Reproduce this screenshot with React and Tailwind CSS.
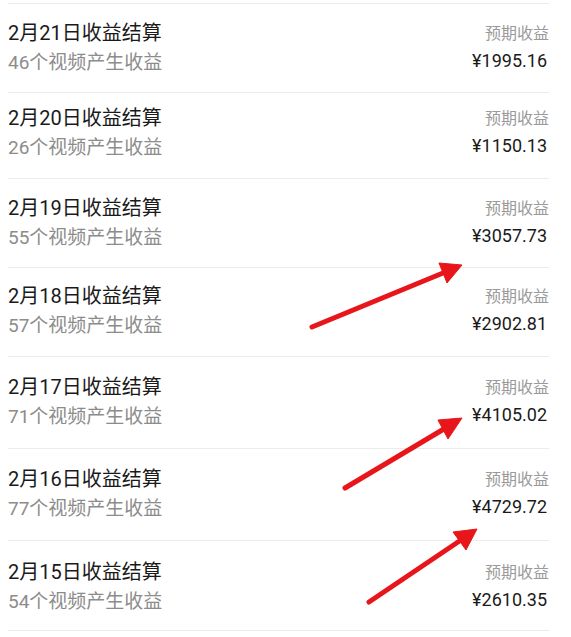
const rows = [
  { date: "2月21日收益结算", count: 46, amount: "¥1995.16", h: "h-[89px]", pt: "pt-[14px]" },
  { date: "2月20日收益结算", count: 26, amount: "¥1150.13", h: "h-[86px]", pt: "pt-[10px]" },
  { date: "2月19日收益结算", count: 55, amount: "¥3057.73", h: "h-[89px]", pt: "pt-[14px]" },
  { date: "2月18日收益结算", count: 57, amount: "¥2902.81", h: "h-[89px]", pt: "pt-[13px]" },
  { date: "2月17日收益结算", count: 71, amount: "¥4105.02", h: "h-[92px]", pt: "pt-[15px]" },
  { date: "2月16日收益结算", count: 77, amount: "¥4729.72", h: "h-[92px]", pt: "pt-[15px]" },
  { date: "2月15日收益结算", count: 54, amount: "¥2610.35", h: "h-[90px]", pt: "pt-[16px]" },
];

const font = { fontFamily: '"Roboto", "Noto Sans CJK SC", sans-serif' };

function Row({ date, count, amount, h, pt }) {
  return (
    <div className={`flex justify-between border-b border-[#ececec] ${h} ${pt}`}>
      <div className="flex flex-col">
        <span className="text-[20px] leading-[30px] text-[#1a1a1a]">{date}</span>
        <span className="text-[19px] leading-[30px] text-[#8c8c8c]">{count}个视频产生收益</span>
      </div>
      <div className="flex flex-col items-end pt-[2px]">
        <span className="text-[16px] leading-[27px] text-[#9a9a9a]">预期收益</span>
        <span className="text-[18px] leading-[27px] text-[#1a1a1a] pr-[2px]">{amount}</span>
      </div>
    </div>
  );
}

function Arrows() {
  const arrows = [
    { x1: 312, y1: 327, tip: [462, 265], a: [439, 263], b: [447, 283] },
    { x1: 345, y1: 488, tip: [462, 418], a: [438, 420], b: [448, 439] },
    { x1: 369, y1: 602, tip: [477, 529], a: [453, 532], b: [466, 550] },
  ];
  return (
    <svg className="absolute inset-0 pointer-events-none" width="571" height="637">
      {arrows.map((r, i) => {
        const mx = (r.a[0] + r.b[0]) / 2;
        const my = (r.a[1] + r.b[1]) / 2;
        return (
          <g key={i} fill="#e8161b" stroke="#e8161b">
            <line x1={r.x1} y1={r.y1} x2={mx} y2={my} strokeWidth="5" strokeLinecap="round" />
            <polygon points={`${r.tip.join(",")} ${r.a.join(",")} ${r.b.join(",")}`} strokeWidth="1" strokeLinejoin="round" />
          </g>
        );
      })}
    </svg>
  );
}

export default function App() {
  return (
    <div className="relative w-[571px] h-[637px] overflow-hidden bg-white" style={font}>
      <div className="pt-[3px] pl-[8px] pr-[22px]">
        <div className="border-t border-[#ececec]">
          {rows.map((r) => (
            <Row key={r.date} {...r} />
          ))}
        </div>
      </div>
      <Arrows />
    </div>
  );
}
